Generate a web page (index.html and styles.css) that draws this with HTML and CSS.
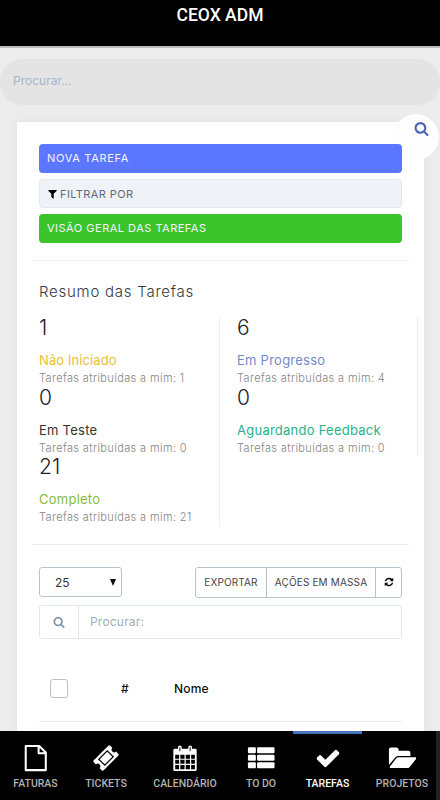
FILE: index.html
```html
<!DOCTYPE html>
<html lang="pt-BR">

<head>
  <meta charset="UTF-8">
  <title>CEOX ADM</title>
  <link rel="stylesheet" href="styles.css">
</head>

<body>
  <header class="topbar">CEOX ADM</header>

  <main class="content">
    <div class="top-search">
      <span class="top-search-text">Procurar...</span>
      <button class="search-bubble" aria-label="Procurar">
        <svg viewBox="0 0 1792 1792"><path d="M1216 832q0-185-131.5-316.5t-316.5-131.5-316.5 131.5-131.5 316.5 131.5 316.5 316.5 131.5 316.5-131.5 131.5-316.5zm512 832q0 52-38 90t-90 38q-54 0-90-38l-343-342q-179 124-399 124-143 0-273.5-55.5t-225-150-150-225-55.5-273.5 55.5-273.5 150-225 225-150 273.5-55.5 273.5 55.5 225 150 150 225 55.5 273.5q0 220-124 399l343 343q37 37 37 90z"/></svg>
      </button>
    </div>

    <section class="panel">
      <!-- Main actions -->
      <div class="actions">
        <a class="btn btn-new"><span>NOVA TAREFA</span></a>
        <a class="btn btn-filter">
          <svg viewBox="0 0 1792 1792"><path d="M1595 295q17 41-14 70l-493 493v742q0 42-39 59-13 5-25 5-27 0-45-19l-256-256q-19-19-19-45v-486l-493-493q-31-29-14-70 17-39 59-39h1280q42 0 59 39z"/></svg>
          <span>FILTRAR POR</span>
        </a>
        <a class="btn btn-overview"><span>VISÃO GERAL DAS TAREFAS</span></a>
      </div>

      <!-- Task summary -->
      <div class="summary">
        <h4><span>Resumo das Tarefas</span></h4>
        <div class="summary-columns">
          <div class="summary-column left">
            <div class="stat">
              <h3>1</h3>
              <p class="status not-started"><span>Não Iniciado</span></p>
              <p class="mine">Tarefas atribuídas a mim: 1</p>
            </div>
            <div class="stat">
              <h3>0</h3>
              <p class="status testing"><span>Em Teste</span></p>
              <p class="mine">Tarefas atribuídas a mim: 0</p>
            </div>
            <div class="stat">
              <h3>21</h3>
              <p class="status complete"><span>Completo</span></p>
              <p class="mine">Tarefas atribuídas a mim: 21</p>
            </div>
          </div>
          <div class="summary-column right">
            <div class="stat">
              <h3>6</h3>
              <p class="status in-progress"><span>Em Progresso</span></p>
              <p class="mine">Tarefas atribuídas a mim: 4</p>
            </div>
            <div class="stat">
              <h3>0</h3>
              <p class="status feedback"><span>Aguardando Feedback</span></p>
              <p class="mine">Tarefas atribuídas a mim: 0</p>
            </div>
          </div>
        </div>
      </div>

      <!-- Table controls -->
      <div class="controls">
        <div class="page-size"><span>25</span><i class="caret"></i></div>
        <div class="btn-group">
          <a class="export">EXPORTAR</a>
          <a class="bulk">AÇÕES EM MASSA</a>
          <a class="reload">
            <svg viewBox="0 0 1792 1792"><path d="M1639 1056q0 5-1 7-64 268-268 434.5t-478 166.5q-146 0-282.5-55t-243.5-157l-129 129q-19 19-45 19t-45-19-19-45v-448q0-26 19-45t45-19h448q26 0 45 19t19 45-19 45l-137 137q71 66 161 102t187 36q134 0 250-65t186-179q11-17 53-117 8-23 30-23h192q13 0 22.5 9.5t9.5 22.5zm25-800v448q0 26-19 45t-45 19h-448q-26 0-45-19t-19-45 19-45l138-138q-148-137-349-137-134 0-250 65t-186 179q-11 17-53 117-8 23-30 23h-199q-13 0-22.5-9.5t-9.5-22.5v-7q65-268 270-434.5t480-166.5q146 0 284 55.5t245 156.5l130-129q19-19 45-19t45 19 19 45z"/></svg>
          </a>
        </div>
      </div>
      <div class="table-search">
        <div class="addon">
          <svg viewBox="0 0 1792 1792"><path d="M1216 832q0-185-131.5-316.5t-316.5-131.5-316.5 131.5-131.5 316.5 131.5 316.5 316.5 131.5 316.5-131.5 131.5-316.5zm512 832q0 52-38 90t-90 38q-54 0-90-38l-343-342q-179 124-399 124-143 0-273.5-55.5t-225-150-150-225-55.5-273.5 55.5-273.5 150-225 225-150 273.5-55.5 273.5 55.5 225 150 150 225 55.5 273.5q0 220-124 399l343 343q37 37 37 90z"/></svg>
        </div>
        <span>Procurar:</span>
      </div>

      <div class="table-head">
        <i class="checkbox"></i>
        <span class="col-id">#</span>
        <span class="col-name">Nome</span>
      </div>
    </section>
  </main>

  <nav class="tabbar">
    <a class="tab">
      <svg viewBox="0 0 30 30"><path d="M4 2.200H18.500l7 7V28H4zM17.800 2.500V10H25" fill="none" stroke="currentColor" stroke-width="2.200" stroke-linejoin="round"/></svg>
      <span>FATURAS</span>
    </a>
    <a class="tab">
      <svg viewBox="0 0 30 30"><g transform="rotate(-45 15 15)"><path fill="currentColor" fill-rule="evenodd" d="M4 7.500h22a1.500 1.500 0 0 1 1.500 1.500v3.200a2.800 2.800 0 0 0 0 5.600V21a1.500 1.500 0 0 1-1.500 1.500H4A1.500 1.500 0 0 1 2.500 21v-3.200a2.800 2.800 0 0 0 0-5.600V9A1.500 1.500 0 0 1 4 7.500zM8 9.800v10.400h14V9.800z"/><path fill="currentColor" d="M9.300 11.100h11.400v7.800H9.300z"/></g></svg>
      <span>TICKETS</span>
    </a>
    <a class="tab">
      <svg viewBox="0 0 30 30"><path fill="currentColor" fill-rule="evenodd" d="M4 5h3.500V3.500a2 2 0 0 1 4 0V5h7V3.500a2 2 0 0 1 4 0V5H26a1.500 1.500 0 0 1 1.500 1.500v21A1.500 1.500 0 0 1 26 29H4a1.500 1.500 0 0 1-1.500-1.500v-21A1.500 1.500 0 0 1 4 5zm5-1.500v4.200h1V3.500zm11 0v4.200h1V3.500zM4.500 11.500v4.200h4.200v-4.200zm5.500 0v4.200h4.500v-4.200zm5.800 0v4.200h4.500v-4.200zm5.800 0v4.200h4v-4.200zM4.500 17v4.200h4.200V17zm5.500 0v4.200h4.500V17zm5.800 0v4.200h4.500V17zm5.800 0v4.200h4V17zM4.500 22.600V27h4.200v-4.400zm5.500 0V27h4.500v-4.400zm5.800 0V27h4.500v-4.400zm5.800 0V27h4v-4.400z"/></svg>
      <span>CALENDÁRIO</span>
    </a>
    <a class="tab">
      <svg viewBox="0 0 30 30"><g fill="currentColor"><rect x="1" y="3.500" width="8.500" height="6.500" rx="1.200"/><rect x="10.800" y="3.500" width="18.700" height="6.500" rx="1.200"/><rect x="1" y="11.500" width="8.500" height="6.500" rx="1.200"/><rect x="10.800" y="11.500" width="18.700" height="6.500" rx="1.200"/><rect x="1" y="19.500" width="8.500" height="6.500" rx="1.200"/><rect x="10.800" y="19.500" width="18.700" height="6.500" rx="1.200"/></g></svg>
      <span>TO DO</span>
    </a>
    <a class="tab active">
      <svg viewBox="-60 -60 1912 1912"><path fill="currentColor" d="M1671 566q0 40-28 68l-724 724-136 136q-28 28-68 28t-68-28l-136-136-362-362q-28-28-28-68t28-68l136-136q28-28 68-28t68 28l294 295 656-657q28-28 68-28t68 28l136 136q28 28 28 68z"/></svg>
      <span>TAREFAS</span>
    </a>
    <a class="tab">
      <svg viewBox="0 0 30 30"><g fill="currentColor"><path d="M1 22.500V6a2.300 2.300 0 0 1 2.300-2.300h5.700A2.300 2.300 0 0 1 11.300 6v1.300h10.400A2.300 2.300 0 0 1 24 9.600v3.200H11.500c-1.600 0-3 .7-4 1.900z"/><path d="M11.500 14.200h17.500c1.200 0 1.700.9 1 1.800l-6.500 8.500c-.6.800-1.600 1.300-2.600 1.300H3c-1.100 0-1.600-.8-.9-1.700l6.500-8.500c.7-.9 1.800-1.400 2.900-1.400z"/></g></svg>
      <span>PROJETOS</span>
    </a>
  </nav>
</body>

</html>
```
FILE: styles.css
```css
* {
  box-sizing: border-box;
}

body {
  font-family: Inter, "Open Sans", sans-serif;
  font-size: 12px;
  background-color: #ebebeb;
  margin: 0;
  height: 800px;
  display: flex;
  flex-direction: column;
  overflow: hidden;
}

h3, h4, p {
  margin: 0;
}

.topbar {
  height: 48px;
  background-color: #000;
  border-bottom: 2px solid #bdbdbd;
  color: #fff;
  font-family: Roboto, sans-serif;
  font-size: 17.500px;
  font-weight: 500;
  line-height: 30px;
  text-align: center;
}

.content {
  flex: 1;
  min-height: 0;
  padding-top: 11px;
  background-color: #ececec;
  overflow: hidden;
}

.top-search {
  position: relative;
  height: 46px;
  padding-left: 13px;
  border-radius: 23px;
  background-color: #e4e4e4;
  color: #a5b6cb;
  font-size: 12px;
  line-height: 43px;
}

.search-bubble {
  position: absolute;
  top: 55px;
  right: 1px;
  width: 46px;
  height: 46px;
  padding: 7px 0 0 21px;
  border: 0;
  border-radius: 50%;
  background-color: #fdfdfd;
  display: flex;
}

.search-bubble svg {
  width: 15px;
  height: 15px;
  fill: #5064b8;
}

/* White panel */
.panel {
  width: 407px;
  height: 640px;
  margin: 17px 0 0 17px;
  padding: 22px 22px 0;
  background-color: #fff;
  box-shadow: 0 0 12px rgba(0, 0, 0, 0.04);
}

/* keeps the buttons above the search bubble */
.actions {
  position: relative;
  display: flex;
  flex-direction: column;
  gap: 6px;
  margin: 0 -7px;
  padding: 0 7px 17px;
  border-bottom: 1px solid #f0f0f0;
}

.btn {
  height: 29px;
  padding: 0 8px;
  border: 1px solid transparent;
  border-radius: 4px;
  color: #f3f5ff;
  font-size: 11px;
  line-height: 26px;
  letter-spacing: 0.5px;
}

.btn-new {
  padding-left: 7px;
  background-color: #5c77ff;
  letter-spacing: 0.7px;
}

.btn-filter {
  display: flex;
  align-items: center;
  gap: 2px;
  padding-left: 7px;
  background-color: #eff3f7;
  border-color: #e3e8eb;
  color: #626b78;
}

.btn-filter span {
  letter-spacing: 0.4px;
}

.btn-filter svg {
  width: 11px;
  height: 12px;
  fill: #000;
}

.btn-overview {
  padding-left: 7px;
  background-color: #3bc52b;
}

/* Summary */
.summary {
  height: 284px;
  margin: 0 -7px;
  padding: 20px 6px 0 7px;
  border-bottom: 1px solid #efefef;
}

.summary h4 {
  height: 36px;
  color: #323a45;
  font-size: 15px;
  font-weight: 300;
  line-height: 21px;
  letter-spacing: 0.750px;
}

.summary-columns {
  display: flex;
  align-items: flex-start;
  margin-right: -16px;
}

.summary-column {
  border-right: 1px solid #eeeeee;
}

.left {
  width: 181px;
}

.right {
  width: 198px;
  padding-left: 17px;
}

.stat {
  height: 69.500px;
}

.stat h3 {
  height: 34px;
  color: #1e222b;
  font-size: 21px;
  font-weight: 300;
  line-height: 22px;
}

.status {
  font-size: 13px;
  line-height: 18px;
  letter-spacing: 0.250px;
}

.mine {
  color: #858585;
  font-size: 11px;
  font-weight: 300;
  line-height: 18px;
  letter-spacing: 0.380px;
}

.not-started {
  color: #e5c136;
  letter-spacing: 0.100px;
}

.testing {
  color: #333;
}

.complete {
  color: #84bd35;
}

.in-progress {
  color: #7488cd;
}

.feedback {
  color: #27b18b;
}

/* Table controls */
.controls {
  display: flex;
  justify-content: space-between;
  margin-top: 22px;
}

.page-size {
  width: 83px;
  height: 30px;
  padding: 0 5px 0 15px;
  border: 1px solid #b7c5ce;
  border-radius: 3px;
  color: #333;
  line-height: 30px;
  display: flex;
  justify-content: space-between;
}

.caret {
  margin-top: 11px;
  width: 0;
  height: 0;
  border: 3px solid transparent;
  border-top: 7px solid #111;
  border-bottom: 0;
}

.btn-group {
  display: flex;
  height: 31px;
  border: 1px solid #b7c5ce;
  border-radius: 3px;
  color: #444;
  font-size: 10px;
  line-height: 28px;
  letter-spacing: 0.150px;
  text-align: center;
}

.btn-group a + a {
  border-left: 1px solid #b7c5ce;
}

.export {
  width: 70px;
}

.bulk {
  width: 109px;
}

.reload {
  width: 26px;
}

.reload svg {
  width: 10px;
  height: 10px;
  vertical-align: -1px;
}

.table-search {
  display: flex;
  height: 34px;
  margin-top: 7px;
  border: 1px solid #e2e7ed;
  border-radius: 3px;
  color: #9cafbd;
  line-height: 31px;
  letter-spacing: 0.200px;
}

.addon {
  width: 39px;
  margin-right: 11px;
  border-right: 1px solid #e2e7ed;
  display: flex;
  align-items: center;
  justify-content: center;
}

.addon svg {
  width: 12px;
  height: 12px;
  fill: #8497ae;
}

.table-head {
  display: flex;
  align-items: center;
  height: 83px;
  padding: 16px 0 0 11px;
  border-bottom: 1px solid #e9eef4;
  color: #111;
  font-weight: 500;
  letter-spacing: 0.200px;
}

.checkbox {
  width: 18px;
  height: 19px;
  border: 1px solid #b9c2cc;
  border-radius: 3px;
}

.col-id {
  width: 53px;
  margin-left: 53px;
}

/* Bottom tabs */
.tabbar {
  display: grid;
  grid-template-columns: 71px 70px 88px 64px 69px 78px;
  height: 69px;
  background: linear-gradient(to right, #000 436px, #222 436px);
  color: #fff;
  font-family: Roboto, sans-serif;
}

.tab {
  display: flex;
  flex-direction: column;
  align-items: center;
  padding-top: 10px;
  border-top: 3px solid transparent;
}

.tab svg {
  width: 28px;
  height: 28px;
}

.tab span {
  margin-top: 4px;
  color: #b2b2b2;
  font-size: 10.500px;
  font-weight: 500;
  line-height: 15px;
}

.tab:last-child {
  padding-left: 2px;
}

.active {
  border-top-color: #4673bd;
}

.active span {
  color: #fff;
}
```
